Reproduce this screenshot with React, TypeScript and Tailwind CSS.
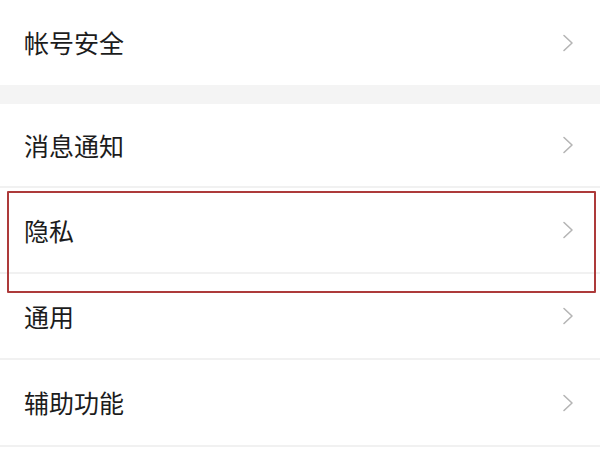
import React from "react";

function Chevron() {
  return (
    <svg width="12" height="18" viewBox="0 0 12 18" className="shrink-0">
      <polyline points="2,1.5 10,9 2,16.5" fill="none" stroke="#b5b5b5" strokeWidth="1.6" strokeLinecap="round" strokeLinejoin="round" />
    </svg>
  );
}

function Row({ label, h, line = true }: { label: string; h: string; line?: boolean }) {
  return (
    <div className={`flex flex-col bg-white ${h}`}>
      <div className="flex flex-1 items-center justify-between pl-6 pr-[26px]">
        <span className="text-[25px] leading-none text-[#1c1c1c]">{label}</span>
        <Chevron />
      </div>
      {line && <div className="h-[2px] bg-[#f1f1f1]" />}
    </div>
  );
}

export default function App() {
  return (
    <div
      className="relative w-[600px] h-[450px] overflow-hidden bg-white"
      style={{ fontFamily: '"Noto Sans CJK SC", "Noto Sans", sans-serif' }}
    >
      <div className="flex flex-col">
        <Row label="帐号安全" h="h-[85px]" line={false} />
        <div className="h-[19px] bg-[#f4f4f4]" />
        <Row label="消息通知" h="h-[84px]" />
        <Row label="隐私" h="h-[86px]" />
        <Row label="通用" h="h-[86px]" />
        <Row label="辅助功能" h="h-[87px]" />
      </div>
      <div className="absolute left-[7px] top-[191px] w-[589px] h-[102px] border-2 border-[#ad3a3a] rounded-[1px]" />
    </div>
  );
}
